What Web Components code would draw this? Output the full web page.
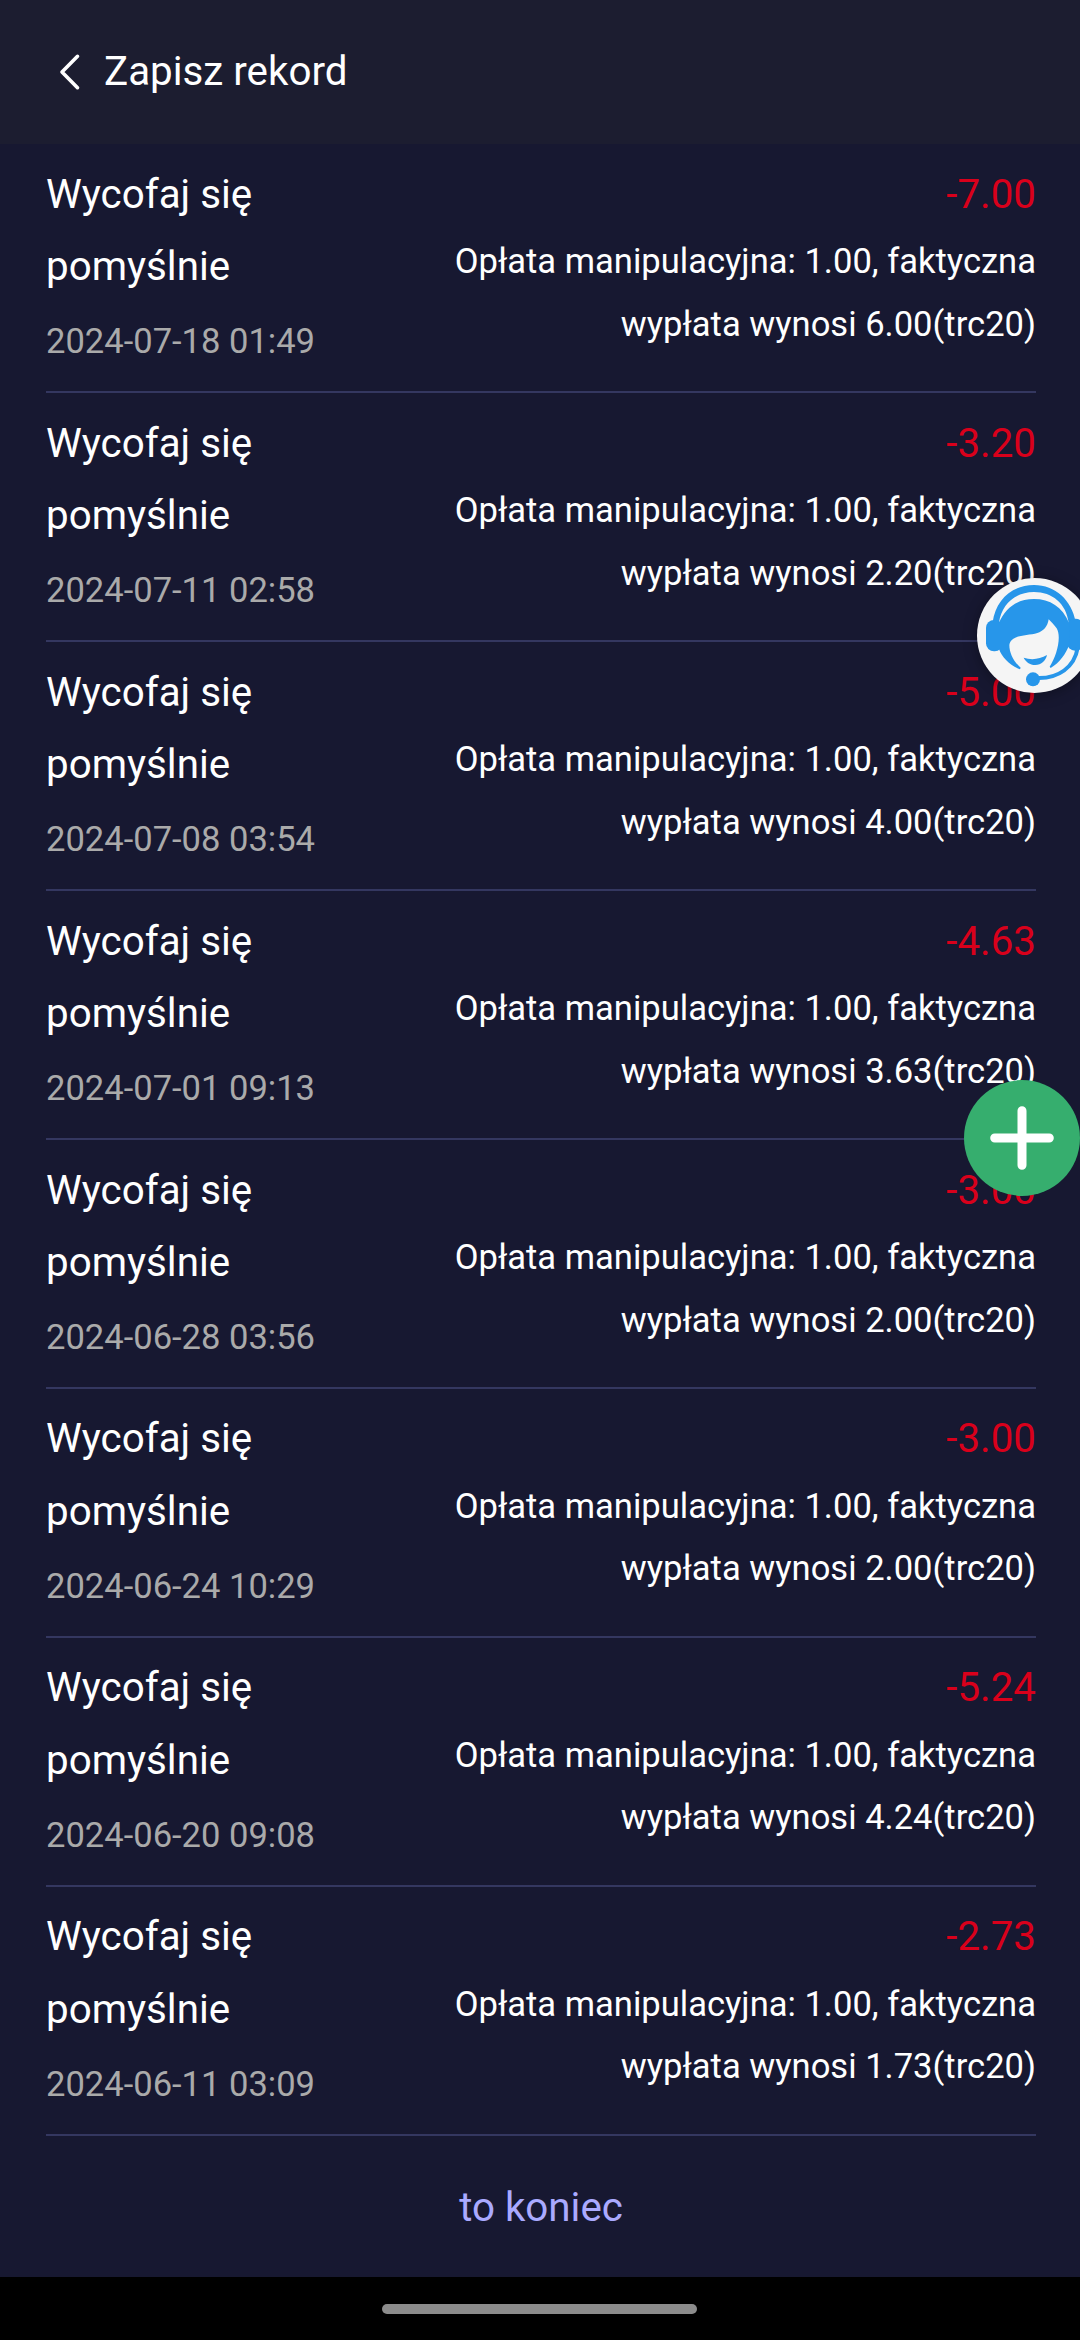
<!DOCTYPE html>
<html lang="pl">
<head>
<meta charset="utf-8">
<title>Zapisz rekord</title>
<style>
  html, body {
    margin: 0;
    background: #171831;
  }

  body {
    font-family: Roboto, "Noto Sans", sans-serif;
    color: #fff;
  }
</style>
</head>
<body>
<record-page></record-page>

<script>
class AppHeader extends HTMLElement {
  constructor() {
    super();
    this.attachShadow({ mode: "open" });
  }

  connectedCallback() {
    this.shadowRoot.innerHTML = `
      <style>
        :host {
          display: flex;
          align-items: center;
          box-sizing: border-box;
          height: 144px;
          padding: 0 58px;
          gap: 23px;
          background: #1c1d30;
          font-size: 40.32px;
          line-height: 72px;
        }

        svg {
          display: block;
        }
      </style>
      <svg width="23" height="38" viewBox="0 0 23 38" fill="none" stroke="#fff" stroke-width="3.6" stroke-linecap="round" stroke-linejoin="round">
        <path d="M19.5 3.3 L4 19 L19.5 34.7" />
      </svg>
      <span><slot></slot></span>
    `;
  }
}

class RecordItem extends HTMLElement {
  constructor() {
    super();
    this.attachShadow({ mode: "open" });
  }

  connectedCallback() {
    this.shadowRoot.innerHTML = `
      <style>
        :host {
          display: flex;
          justify-content: space-between;
          box-sizing: border-box;
          height: 248.97px;
          padding-top: 14.64px;
          border-bottom: 2px solid #343760;
          font-size: 40.32px;
          line-height: 1.8;
        }

        .left {
          width: 296px;
        }

        .title {
          width: 240px;
        }

        .date {
          margin-top: 6px;
          font-size: 34.56px;
          color: #aaa;
          white-space: nowrap;
        }

        .right {
          width: 600px;
          text-align: right;
        }

        .amount {
          color: #d9001b;
        }

        .detail {
          margin-top: -0.78px;
          font-size: 34.56px;
        }
      </style>
      <div class="left">
        <div class="title">Wycofaj się pomyślnie</div>
        <div class="date">${this.getAttribute("date")}</div>
      </div>
      <div class="right">
        <div class="amount">-${this.getAttribute("amount")}</div>
        <div class="detail"><slot></slot></div>
      </div>
    `;
  }
}

class SupportButton extends HTMLElement {
  constructor() {
    super();
    this.attachShadow({ mode: "open" });
  }

  connectedCallback() {
    this.shadowRoot.innerHTML = `
      <style>
        :host {
          display: block;
          width: 115px;
          height: 115px;
          border-radius: 50%;
          background: #f5f5f5;
          box-shadow: 0 2px 14px rgba(0, 0, 0, 0.35);
        }

        svg {
          display: block;
        }
      </style>
      <svg width="115" height="115" viewBox="0 0 345 345">
        <g fill="#2796ea">
          <path d="M47 132 C56 66 105 21 171 21 C235 21 284 66 296 132 L275 134 C268 77 226 42 171 42 C116 42 74 77 66 134 Z" />
          <rect x="27" y="126" width="50" height="94" rx="24" />
          <rect x="270" y="122" width="50" height="96" rx="24" />
          <path d="M66 134 C86 88 122 63 171 63 C219 63 256 87 276 134 L278 198 C266 229 248 254 221 270 L218 266 C240 232 254 176 239 151 C230 139 221 131 215 124 C212 146 199 160 181 165 C150 174 101 169 97 201 C97 226 111 252 131 269 L129 274 C98 262 75 238 66 213 Z" />
          <path d="M140 239 C163 247 188 244 210 231 C207 247 193 261 175 261 C158 261 146 251 140 239 Z" />
          <circle cx="168" cy="304" r="21" />
        </g>
        <path d="M181 300 C244 302 292 268 302 210" fill="none" stroke="#2796ea" stroke-width="12" />
      </svg>
    `;
  }
}

class AddButton extends HTMLElement {
  constructor() {
    super();
    this.attachShadow({ mode: "open" });
  }

  connectedCallback() {
    this.shadowRoot.innerHTML = `
      <style>
        :host {
          display: block;
          width: 116px;
          height: 116px;
          border-radius: 50%;
          background: #36ae6e;
        }

        svg {
          display: block;
        }
      </style>
      <svg width="116" height="116" viewBox="0 0 116 116" stroke="#fff" stroke-width="9" stroke-linecap="round">
        <path d="M30.7 58 H85.3 M58 30.7 V85.3" />
      </svg>
    `;
  }
}

class NavBar extends HTMLElement {
  constructor() {
    super();
    this.attachShadow({ mode: "open" });
  }

  connectedCallback() {
    this.shadowRoot.innerHTML = `
      <style>
        :host {
          display: flex;
          align-items: center;
          justify-content: center;
          box-sizing: border-box;
          height: 63px;
          padding: 1px 1px 0 0;
          background: #000;
        }

        .handle {
          width: 315px;
          height: 10px;
          border-radius: 5px;
          background: #8c8c8c;
        }
      </style>
      <div class="handle"></div>
    `;
  }
}

const records = [
  ["2024-07-18 01:49", "7.00", "6.00"],
  ["2024-07-11 02:58", "3.20", "2.20"],
  ["2024-07-08 03:54", "5.00", "4.00"],
  ["2024-07-01 09:13", "4.63", "3.63"],
  ["2024-06-28 03:56", "3.00", "2.00"],
  ["2024-06-24 10:29", "3.00", "2.00"],
  ["2024-06-20 09:08", "5.24", "4.24"],
  ["2024-06-11 03:09", "2.73", "1.73"],
];

class RecordPage extends HTMLElement {
  constructor() {
    super();
    this.attachShadow({ mode: "open" });
  }

  connectedCallback() {
    this.shadowRoot.innerHTML = `
      <style>
        :host {
          display: flex;
          flex-direction: column;
          position: relative;
          height: 2340px;
          overflow: hidden;
        }

        .list {
          flex: 1;
          padding: 0 44px 0 46px;
        }

        .end {
          padding-top: 36.2px;
          font-size: 40.32px;
          line-height: 1.8;
          text-align: center;
          color: #aaaaff;
        }

        /* floating buttons over the list */
        support-button {
          position: absolute;
          left: 977px;
          top: 578px;
        }

        add-button {
          position: absolute;
          left: 964px;
          top: 1080px;
        }
      </style>
      <app-header>Zapisz rekord</app-header>
      <div class="list">
        ${records
          .map(
            ([date, amount, paid]) =>
              `<record-item date="${date}" amount="${amount}">Opłata manipulacyjna: 1.00, faktyczna wypłata wynosi ${paid}(trc20)</record-item>`
          )
          .join("")}
        <div class="end">to koniec</div>
      </div>
      <nav-bar></nav-bar>
      <support-button></support-button>
      <add-button></add-button>
    `;
  }
}

customElements.define("app-header", AppHeader);
customElements.define("record-item", RecordItem);
customElements.define("support-button", SupportButton);
customElements.define("add-button", AddButton);
customElements.define("nav-bar", NavBar);
customElements.define("record-page", RecordPage);
</script>
</body>
</html>
